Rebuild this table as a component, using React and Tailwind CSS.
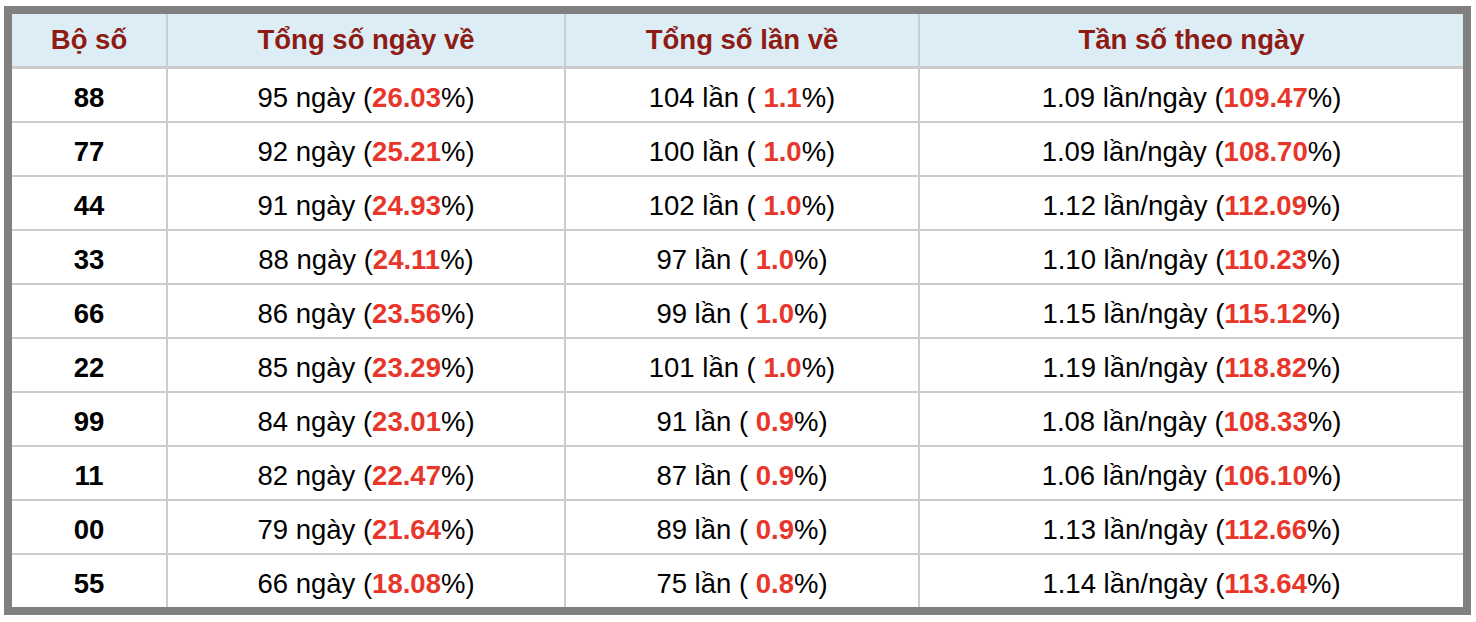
import React from "react";

const rows = [
  ["88", "95", "26.03", "104", "1.1", "1.09", "109.47"],
  ["77", "92", "25.21", "100", "1.0", "1.09", "108.70"],
  ["44", "91", "24.93", "102", "1.0", "1.12", "112.09"],
  ["33", "88", "24.11", "97", "1.0", "1.10", "110.23"],
  ["66", "86", "23.56", "99", "1.0", "1.15", "115.12"],
  ["22", "85", "23.29", "101", "1.0", "1.19", "118.82"],
  ["99", "84", "23.01", "91", "0.9", "1.08", "108.33"],
  ["11", "82", "22.47", "87", "0.9", "1.06", "106.10"],
  ["00", "79", "21.64", "89", "0.9", "1.13", "112.66"],
  ["55", "66", "18.08", "75", "0.8", "1.14", "113.64"],
];

const cols = "grid grid-cols-[154px_396px_352px_543px] gap-x-[2px] bg-[#cccccc]";
const cell = "flex items-center justify-center";
const bodyCell = "flex items-center justify-center bg-white pt-[5px]";

function Red({ children }) {
  return <span className="font-bold text-[#e8362a]">{children}</span>;
}

export default function App() {
  return (
    <div className="bg-white min-h-screen pt-[6px] pl-[4px] font-['Liberation_Sans',Arial,sans-serif] text-[27.5px] text-black">
      <div className="w-[1467px] border-8 border-[#808080]">
        <div className={`${cols} border-b-[3px] border-[#cccccc]`}>
          {["Bộ số", "Tổng số ngày về", "Tổng số lần về", "Tần số theo ngày"].map((h) => (
            <div key={h} className={`${cell} h-[52px] bg-[#ddedf5] font-bold text-[#8e1b14]`}>
              {h}
            </div>
          ))}
        </div>
        {rows.map((r, i) => (
          <div
            key={r[0]}
            className={`${cols} ${i < rows.length - 1 ? "border-b-2 border-[#cccccc]" : ""}`}
          >
            <div className={`${bodyCell} h-[52px] font-bold`}>{r[0]}</div>
            <div className={bodyCell}>
              {r[1]} ngày (<Red>{r[2]}</Red>%)
            </div>
            <div className={`${bodyCell} whitespace-pre`}>
              {r[3]} lần ( <Red>{r[4]}</Red>%)
            </div>
            <div className={bodyCell}>
              {r[5]} lần/ngày (<Red>{r[6]}</Red>%)
            </div>
          </div>
        ))}
      </div>
    </div>
  );
}
